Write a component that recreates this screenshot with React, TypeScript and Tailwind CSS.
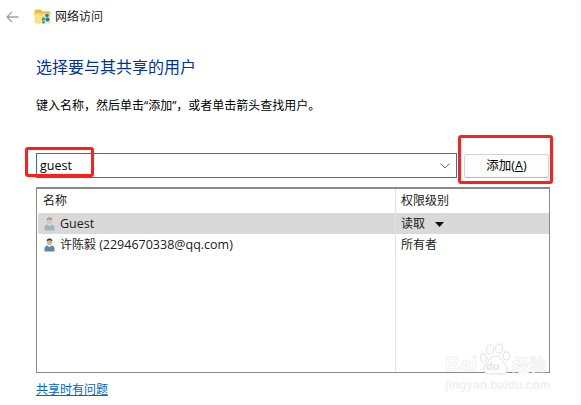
import React from 'react';

const FONT = "font-['Open_Sans','Noto_Sans_CJK_SC',sans-serif]";

const FolderIcon = () => (
  <svg width="17" height="15" viewBox="0 0 17 15">
    <path d="M0.5 2 Q0.5 0.5 2 0.5 H6.5 L8.5 2.5 H15 Q16.5 2.5 16.5 4 V6 H0.5 Z" fill="#f2b937" />
    <path d="M0.5 4.5 H15.5 Q16.5 4.5 16.5 5.5 V13 Q16.5 14.5 15 14.5 H2 Q0.5 14.5 0.5 13 Z" fill="#fbdf8a" />
    <circle cx="13" cy="6.5" r="1.8" fill="#1f78c8" />
    <circle cx="9.5" cy="10" r="1.8" fill="#27a8a0" />
    <circle cx="13.5" cy="10.5" r="2" fill="#1f78c8" />
    <circle cx="9.5" cy="13.3" r="1.4" fill="#1fa3a8" />
  </svg>
);

const UserIcon = ({ muted }: { muted?: boolean }) => (
  <svg width="11" height="14" viewBox="0 0 11 14" className={muted ? 'opacity-45' : ''}>
    <ellipse cx="5.5" cy="3.8" rx="2.8" ry="3.4" fill="#d8b48c" />
    <path d="M2.7 3.6 Q2.6 0.4 5.5 0.4 Q8.4 0.4 8.3 3.6 Q7 2 5.5 2.2 Q4 2.2 2.7 3.6 Z" fill="#4a3a2e" />
    <path d="M0.5 13.5 V10.5 Q0.5 8 3.5 7.5 L5.5 9 L7.5 7.5 Q10.5 8 10.5 10.5 V13.5 Z" fill="#5f86ad" />
    <path d="M4.5 7.6 H6.5 L5.5 9.5 Z" fill="#e8eef5" />
  </svg>
);

const Watermark = () => (
  <div className="absolute left-[445px] top-[343px] w-[104px] h-[48px] pointer-events-none font-['Liberation_Sans','Noto_Sans_CJK_SC',sans-serif]">
    <svg width="31" height="33" viewBox="0 0 34 36" className="absolute left-[35px] top-0" fill="#ffffff" stroke="#e8e8e8" strokeWidth="1.4">
      <ellipse cx="11" cy="7" rx="4" ry="5" />
      <ellipse cx="21" cy="6" rx="4" ry="5" />
      <ellipse cx="29" cy="14" rx="3.5" ry="4.5" />
      <ellipse cx="4" cy="16" rx="3.5" ry="4.5" />
      <path d="M17 14 C11 14 10 20 6 24 C2 29 6 35 12 34 C15 33 19 33 22 34 C29 35 32 29 28 24 C24 20 23 14 17 14 Z" />
    </svg>
    <div className="absolute left-0 top-[13px] flex items-end h-[18px] font-bold leading-none text-white [-webkit-text-stroke:0.5px_#e8e8e8]">
      <span className="w-[41px] text-[20px] tracking-[0.5px]">Bai</span>
      <span className="w-[26px] text-[11px] pb-[2px] text-[#e4e4e4] [-webkit-text-stroke:0]">du</span>
      <span className="text-[17px]">经验</span>
    </div>
    <div className="absolute left-0 top-[36px] text-[12px] font-bold leading-[12px] whitespace-nowrap text-[#f1f1f1]">
      jingyan.baidu.com
    </div>
  </div>
);

const App: React.FC = () => {
  return (
    <div className={`relative w-[581px] h-[405px] overflow-hidden bg-white text-[12px] text-[#1a1a1a] ${FONT}`}>
      <div className="flex items-center h-[15px] mt-[9px] pl-[6px]">
        <svg width="13" height="12" viewBox="0 0 13 12" fill="none" stroke="#a3a3a3" strokeWidth="1.3">
          <path d="M12.5 6 H1 M6 1 L1 6 L6 11" />
        </svg>
        <div className="ml-[15px]">
          <FolderIcon />
        </div>
        <span className="ml-[4px] leading-[15px]">网络访问</span>
      </div>

      <div className="pl-[36px] pr-[31px]">
        <h1 className="mt-[32px] text-[16px] leading-[22px] font-normal text-[#003399]">选择要与其共享的用户</h1>
        <p className="mt-[19px] leading-[18px] text-black">键入名称，然后单击“添加”，或者单击箭头查找用户。</p>

        <div className="flex gap-[7px] mt-[38px] h-[25px]">
          <div className="flex items-center justify-between w-[421px] border border-[#1979c9] pl-[3px] pr-[6px]">
            <span className="text-[12.5px] text-black pt-px">guest</span>
            <svg width="10" height="6" viewBox="0 0 10 6" fill="none" stroke="#6b6b6b" strokeWidth="1">
              <path d="M0.5 0.5 L5 5 L9.5 0.5" />
            </svg>
          </div>
          <button className="w-[85px] mt-[1px] h-[24px] pt-px rounded-[3px] border border-[#d4d4d4] border-b-[#b5b5b5] bg-[#fdfdfd] text-black text-[12.5px]">
            添加(<span className="underline">A</span>)
          </button>
        </div>

        <div className="mt-[9px] w-[514px] h-[186px] border border-t-2 border-[#8a8a8a] relative">
          <div className="flex h-[24px] items-center pl-[6px]">
            <span className="w-[351px]">名称</span>
            <span className="pl-[7px]">权限级别</span>
          </div>
          <div className="flex h-[21px] items-center bg-[#d9d9d9] ml-px rounded-l-[2px] pl-[6px]">
            <span className="w-[350px] flex items-center gap-[5px]">
              <UserIcon muted />
              <span className="text-[12.5px] pt-px">Guest</span>
            </span>
            <span className="pl-[7px] pt-px flex items-center">
              读取
              <svg width="9" height="5" viewBox="0 0 9 5" className="ml-[10px]">
                <path d="M0 0 H9 L4.5 5 Z" fill="#111" />
              </svg>
            </span>
          </div>
          <div className="flex h-[21px] items-center ml-px pl-[6px]">
            <span className="w-[350px] flex items-center gap-[5px]">
              <UserIcon />
              <span className="pt-px">
                许陈毅 <span className="text-[12.5px]">(2294670338@qq.com)</span>
              </span>
            </span>
            <span className="pl-[7px] pt-px">所有者</span>
          </div>
          <div className="absolute left-[358px] top-0 bottom-0 w-px bg-[#e3e3e3]" />
        </div>

        <a className="block mt-[9px] w-fit leading-[15px] underline text-[#0066cc]">共享时有问题</a>
      </div>

      <Watermark />

      <div className="absolute left-[25px] top-[147px] w-[69px] h-[30px] border-[3px] border-[#ff1f1a] rounded-[3px]" />
      <div className="absolute left-[458px] top-[135px] w-[95px] h-[49px] border-[3px] border-[#ff1f1a] rounded-[3px]" />
      <div className="absolute right-0 top-0 bottom-0 w-[6px] bg-[#fcfcfc]" />
    </div>
  );
};

export default App;
